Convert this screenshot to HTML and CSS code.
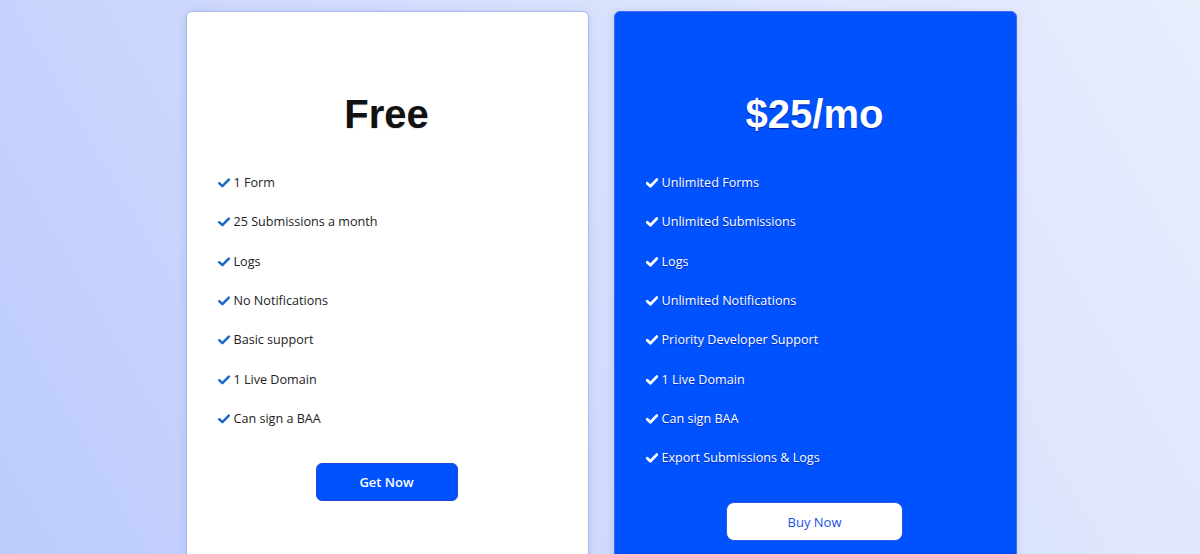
FILE: index.html
```html
<!DOCTYPE html>
<html lang="en">
<head>
    <meta charset="UTF-8">
    <meta name="viewport" content="width=device-width, initial-scale=1.0">
    <title>Pricing</title>
    <link rel="stylesheet" href="styles.css">
</head>
<body>
    <div class="pricing">
        <div class="card">
            <h1 class="price">Free</h1>
            <ul class="features">
                <li><svg class="check" viewBox="0 0 12 10"><polyline points="1.2,5.2 4.4,8.2 10.8,1.6"/></svg>1 Form</li>
                <li><svg class="check" viewBox="0 0 12 10"><polyline points="1.2,5.2 4.4,8.2 10.8,1.6"/></svg>25 Submissions a month</li>
                <li><svg class="check" viewBox="0 0 12 10"><polyline points="1.2,5.2 4.4,8.2 10.8,1.6"/></svg>Logs</li>
                <li><svg class="check" viewBox="0 0 12 10"><polyline points="1.2,5.2 4.4,8.2 10.8,1.6"/></svg>No Notifications</li>
                <li><svg class="check" viewBox="0 0 12 10"><polyline points="1.2,5.2 4.4,8.2 10.8,1.6"/></svg>Basic support</li>
                <li><svg class="check" viewBox="0 0 12 10"><polyline points="1.2,5.2 4.4,8.2 10.8,1.6"/></svg>1 Live Domain</li>
                <li><svg class="check" viewBox="0 0 12 10"><polyline points="1.2,5.2 4.4,8.2 10.8,1.6"/></svg>Can sign a BAA</li>
            </ul>
            <button class="btn btn-get">Get Now</button>
        </div>
        <div class="card card-pro">
            <h1 class="price">$25/mo</h1>
            <ul class="features">
                <li><svg class="check" viewBox="0 0 12 10"><polyline points="1.2,5.2 4.4,8.2 10.8,1.6"/></svg>Unlimited Forms</li>
                <li><svg class="check" viewBox="0 0 12 10"><polyline points="1.2,5.2 4.4,8.2 10.8,1.6"/></svg>Unlimited Submissions</li>
                <li><svg class="check" viewBox="0 0 12 10"><polyline points="1.2,5.2 4.4,8.2 10.8,1.6"/></svg>Logs</li>
                <li><svg class="check" viewBox="0 0 12 10"><polyline points="1.2,5.2 4.4,8.2 10.8,1.6"/></svg>Unlimited Notifications</li>
                <li><svg class="check" viewBox="0 0 12 10"><polyline points="1.2,5.2 4.4,8.2 10.8,1.6"/></svg>Priority Developer Support</li>
                <li><svg class="check" viewBox="0 0 12 10"><polyline points="1.2,5.2 4.4,8.2 10.8,1.6"/></svg>1 Live Domain</li>
                <li><svg class="check" viewBox="0 0 12 10"><polyline points="1.2,5.2 4.4,8.2 10.8,1.6"/></svg>Can sign BAA</li>
                <li><svg class="check" viewBox="0 0 12 10"><polyline points="1.2,5.2 4.4,8.2 10.8,1.6"/></svg>Export Submissions &amp; Logs</li>
            </ul>
            <button class="btn btn-buy">Buy Now</button>
        </div>
    </div>
</body>
</html>
```

FILE: styles.css
```css
*{
    margin: 0;
    padding: 0;
    box-sizing: border-box;
}
body{
    overflow: hidden;
    width: 100vw;
    height: 100vh;
    font-family: "Open Sans", "Liberation Sans", sans-serif;
    background: linear-gradient(60deg, #bccbfc 0%, #d3dcfd 45%, #e9eefd 100%);
}
.pricing{
    display: flex;
    justify-content: center;
    gap: 25px;
    padding: 11px 0 0 2px;
}
.card{
    width: 403px;
    height: 600px;
    background: #fff;
    border: 1px solid #a9baf3;
    border-radius: 6px;
    box-shadow: 0 2px 8px rgba(40, 60, 160, .15);
    padding: 79px 32px 0 31px;
    display: flex;
    flex-direction: column;
    align-items: center;
}
.card-pro{
    background: #0052ff;
    border-color: #3c6bf0;
    color: #fff;
}
.price{
    font-family: "Liberation Sans", Arial, sans-serif;
    font-size: 40px;
    line-height: 46px;
    font-weight: 700;
    color: #111;
    text-shadow: 0 1px 1px rgba(0, 0, 0, .1);
}
.card-pro .price{
    color: #fff;
    text-shadow: 0 1px 1px rgba(0, 0, 120, .6);
}
.features{
    list-style: none;
    align-self: stretch;
    margin-top: 36px;
    display: flex;
    flex-direction: column;
    gap: 19.33px;
}
.features li{
    display: flex;
    align-items: center;
    gap: 4px;
    font-size: 12.6px;
    line-height: 20px;
    color: #222;
}
.card-pro .features li{
    color: #fff;
    font-weight: 500;
    text-shadow: 0 1px 1px rgba(0, 0, 120, .5);
}
.check{
    width: 12px;
    height: 10px;
    fill: none;
    stroke: #1767c9;
    stroke-width: 2.4;
    stroke-linecap: round;
    stroke-linejoin: round;
}
.card-pro .check{
    stroke: #fff;
    stroke-width: 2.8;
}
.btn{
    font-family: "Open Sans", "Liberation Sans", sans-serif;
    font-size: 13px;
    cursor: pointer;
}
.btn-get{
    margin-top: 34px;
    width: 142px;
    height: 38px;
    background: #0052ff;
    color: #fff;
    font-weight: 600;
    border: 1px solid #2447d8;
    border-radius: 6px;
}
.btn-buy{
    margin-top: 34px;
    width: 177px;
    height: 39px;
    background: #fff;
    color: #1a4fe6;
    border: 1px solid #2a55e8;
    border-radius: 8px;
}
```
